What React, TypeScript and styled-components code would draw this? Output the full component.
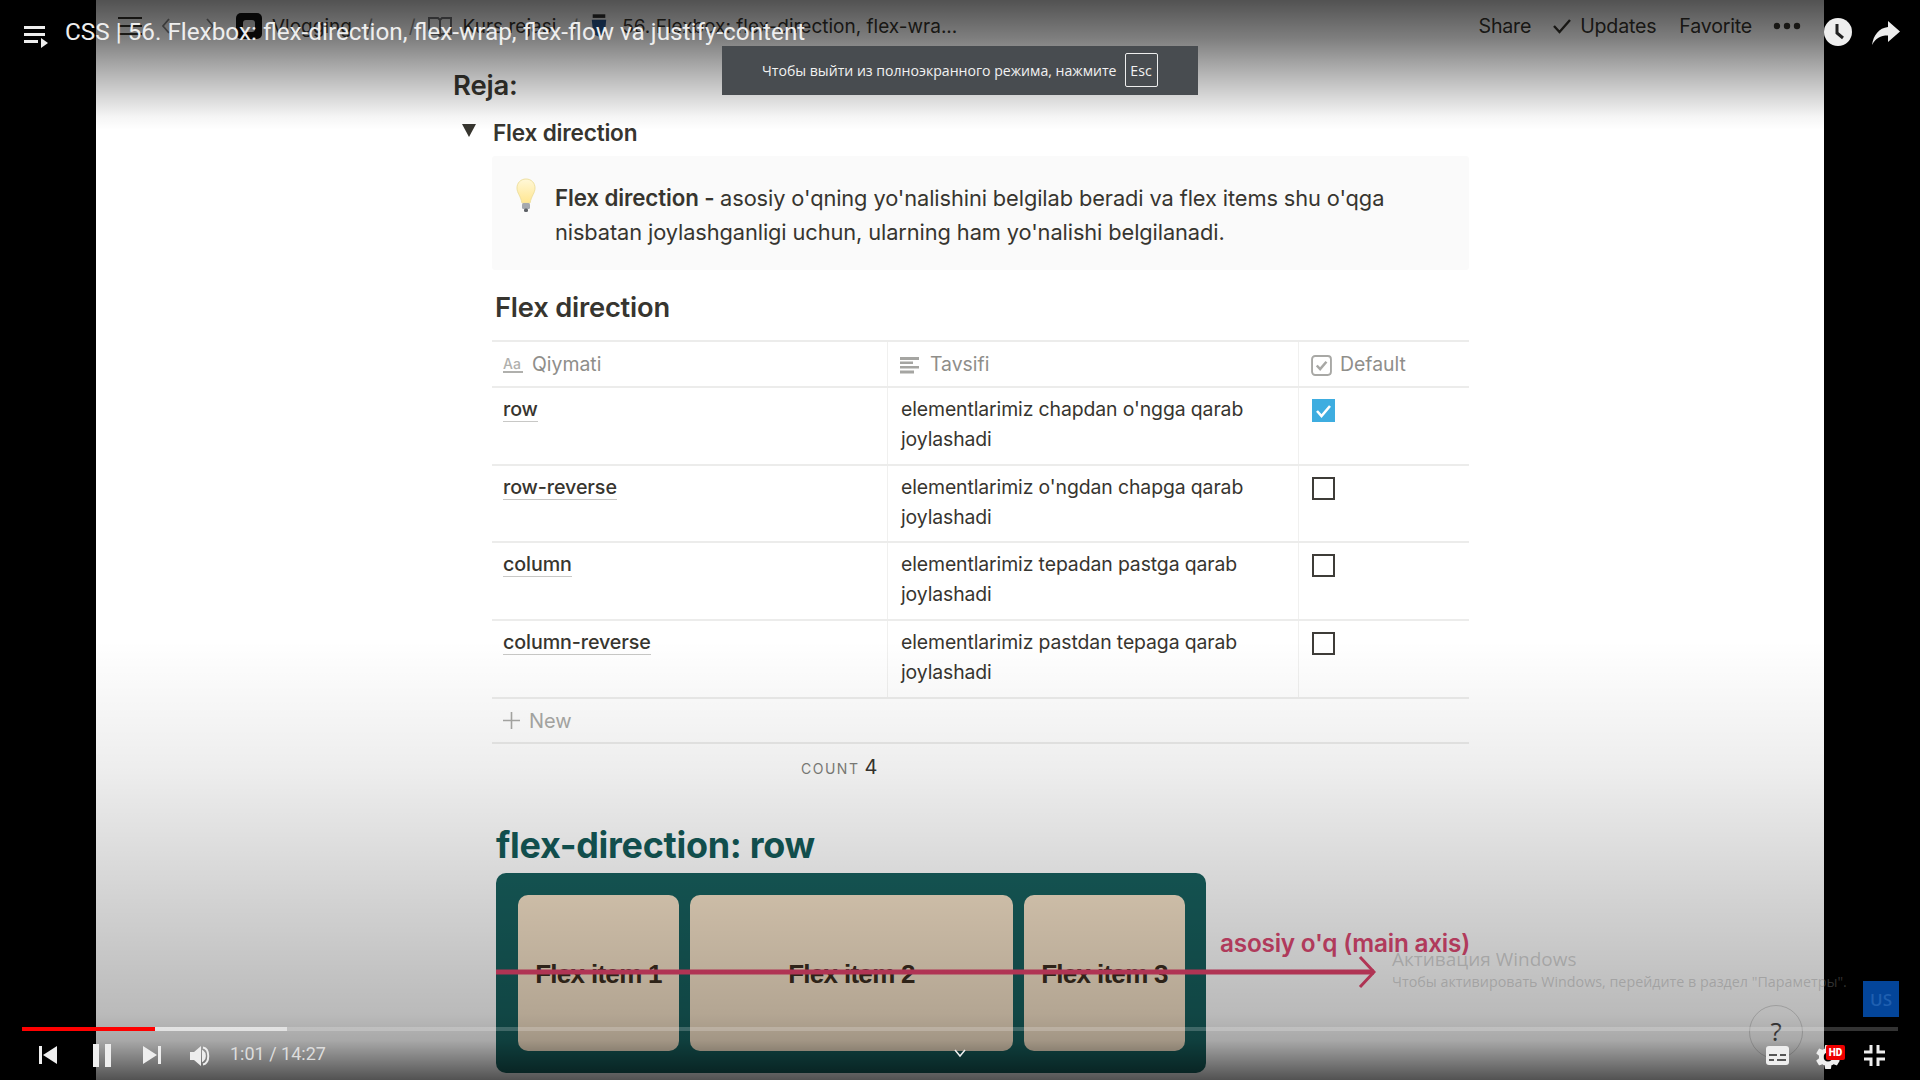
import React from "react";
import styled, { createGlobalStyle } from "styled-components";
import { MdSettings } from "react-icons/md";

const Global = createGlobalStyle`
  html, body { margin: 0; padding: 0; background: #000; }
  body { width: 1920px; height: 1080px; overflow: hidden; font-family: Inter, "Noto Sans", sans-serif; }
  * { box-sizing: border-box; }
`;

const Stage = styled.div`
  position: relative; width: 1920px; height: 1080px; display: flex; overflow: hidden; background: #000;
`;
const Pillar = styled.div`
  width: 96px; flex: none; background: #000;
`;
const Frame = styled.main`
  position: relative; width: 1728px; height: 1080px; flex: none; background: #fff; color: #37352f;
  display: flex; flex-direction: column; overflow: hidden;
`;

/* Notion top bar */
const TopBar = styled.div`
  height: 52px; flex: none; display: flex; align-items: center; justify-content: space-between;
  padding: 0 23px 0 22px; font-size: 19.6px; color: #37352f; letter-spacing: -0.2px;
`;
const Crumbs = styled.div`
  display: flex; align-items: center; white-space: nowrap; font-size: 19px; letter-spacing: 0;
`;
const Crumb = styled.span<{ $gap?: number; $inner?: number }>`
  display: inline-flex; align-items: center; gap: ${p => p.$inner ?? 10}px; margin-left: ${p => p.$gap ?? 0}px;
`;
const Sep = styled.span<{ $gap: number }>`
  color: #999; margin-left: ${p => p.$gap}px;
`;
const Arrows = styled.svg`
  margin-left: 18px;
`;
const Actions = styled.div`
  display: flex; align-items: center; gap: 21px; white-space: nowrap;
`;
const ActionCheck = styled.span`
  display: inline-flex; align-items: center; gap: 8px; margin-right: 2px;
`;

/* page */
const Page = styled.div`
  padding-left: 357px; width: 1373px; display: flex; flex-direction: column;
`;
const Reja = styled.h2`
  margin: 13px 0 0; font-size: 27.5px; line-height: 40px; font-weight: 600; letter-spacing: -0.2px;
`;
const ToggleRow = styled.div`
  margin-top: 7px; height: 40px; display: flex; align-items: center; gap: 17px;
  font-size: 22.6px; font-weight: 600; letter-spacing: -0.2px;
`;
const Triangle = styled.span`
  width: 0; height: 0; margin-left: 9px; margin-bottom: 3px;
  border-left: 7px solid transparent; border-right: 7px solid transparent; border-top: 13px solid #37352f;
`;
const Indent = styled.div`
  margin-left: 39px; display: flex; flex-direction: column;
`;
const Callout = styled.div`
  margin-top: 4px; height: 114px; background: #fafafa; border-radius: 3px; display: flex;
  padding: 25px 20px 0 24px; gap: 19px;
`;
const CalloutText = styled.p`
  margin: 0; font-size: 21.8px; line-height: 33.5px; width: 860px; letter-spacing: -0.1px;
  strong { font-weight: 600; font-size: 22.3px; }
`;
const TableTitle = styled.h3`
  margin: 19px 0 0 3px; height: 51px; line-height: 38px; font-size: 27.3px; font-weight: 600; letter-spacing: -0.2px;
`;
const Row = styled.div<{ $h: number }>`
  display: grid; grid-template-columns: 396px 411px 169px; height: ${p => p.$h}px;
  border-bottom: 2px solid #ececeb;
`;
const HeaderRow = styled(Row)`
  border-top: 2px solid #ececeb;
`;
const Cell = styled.div`
  padding: 8px 12px 0 11px; font-size: 19.4px; line-height: 29.5px; border-right: 1px solid #f0f0ef;
  &:last-child { border-right: 0; padding-left: 13px; }
`;
const HeadCell = styled(Cell)`
  display: flex; align-items: center; gap: 9px; padding-top: 2px; color: #8f8e8a;
  &:last-child { padding-left: 12px; gap: 8px; }
`;
const DescCell = styled(Cell)`
  padding-left: 13px; padding-top: 7px; letter-spacing: -0.1px;
`;
const NameCell = styled(Cell)`
  padding-top: 7px; font-size: 19.7px;
`;
const Name = styled.span`
  font-weight: 500; border-bottom: 1px solid #c8c8c6; letter-spacing: -0.1px;
`;
const Box = styled.div<{ $on?: boolean }>`
  width: 23px; height: 23px; margin-top: 3px; display: flex; align-items: center; justify-content: center;
  background: ${p => (p.$on ? "#3eade0" : "#fff")};
  border: ${p => (p.$on ? "none" : "2px solid #3e3c38")};
`;
const NewRow = styled.div`
  height: 45px; display: flex; align-items: center; gap: 9px; padding-left: 11px;
  border-bottom: 2px solid #ececeb; color: #a9a9a6; font-size: 20px;
`;
const Count = styled.div`
  height: 48px; padding-left: 309px; display: flex; align-items: center; gap: 5px;
  color: #7f7f7b; font-size: 14px; letter-spacing: 1.5px;
  b { font-weight: 400; font-size: 20px; color: #37352f; letter-spacing: 0; position: relative; top: -1px; }
`;
const FlexTitle = styled.h1`
  margin: 30px 0 0 4px; height: 46px; line-height: 46px; font-size: 36px; font-weight: 700;
  color: #145a58; letter-spacing: -0.3px;
`;
const DiagramRow = styled.div`
  position: relative; display: flex; margin-left: 4px; margin-top: 5px;
`;
const Container = styled.div`
  width: 710px; height: 200px; flex: none; background: #17605e; border-radius: 10px;
  padding: 22px; display: flex; gap: 11px;
`;
const Item = styled.div<{ $w: number }>`
  width: ${p => p.$w}px; flex: none; background: #f6e3c9; border-radius: 10px; padding-top: 3px;
  display: flex; align-items: center; justify-content: center; letter-spacing: -0.7px;
  font-family: "Liberation Sans", Arial, sans-serif; font-size: 26px; font-weight: 700; color: #3c2e20;
`;
const AxisLabel = styled.div`
  margin: 55px 0 0 14px; white-space: nowrap; font-size: 24.3px; font-weight: 600; color: #e04a74; letter-spacing: -0.2px;
`;
const Arrow = styled.svg`
  position: absolute; left: 0; top: 79px;
`;

/* Overlays */
const TopShade = styled.div`
  position: absolute; left: 0; right: 0; top: 0; height: 130px; pointer-events: none;
  background: linear-gradient(to bottom, rgba(0,0,0,.68), rgba(0,0,0,.5) 30%, rgba(0,0,0,.25) 62%, rgba(0,0,0,.04) 90%, rgba(0,0,0,0));
`;
const BottomShade = styled.div`
  position: absolute; left: 0; right: 0; bottom: 0; height: 440px; pointer-events: none;
  background: linear-gradient(to bottom, rgba(0,0,0,0), rgba(0,0,0,.07) 30%, rgba(0,0,0,.16) 55%, rgba(0,0,0,.27) 85%, rgba(0,0,0,.34) 91%, rgba(0,0,0,.68));
`;
const Hud = styled.div`
  position: absolute; inset: 0; pointer-events: none; color: #fff;
`;
const PlayerTitle = styled.div`
  position: absolute; left: 65px; top: 16px; font-family: Roboto, sans-serif; font-size: 24.3px; line-height: 32px;
  color: #eee; white-space: nowrap;
`;
const Toast = styled.div`
  position: absolute; left: 722px; top: 46px; width: 476px; height: 49px; background: #484c50;
  display: flex; align-items: center; padding-left: 40px; gap: 8px; font-family: "Open Sans", sans-serif;
  font-size: 14.1px; color: #f2f2f2; padding-bottom: 1px;
`;
const Esc = styled.span`
  width: 33px; height: 34px; border: 1px solid #eee; border-radius: 2px; display: flex; align-items: center; justify-content: center;
`;
const Glyph = styled.svg<{ $x: number; $y: number }>`
  position: absolute; left: ${p => p.$x}px; top: ${p => p.$y}px;
`;
const Track = styled.div`
  position: absolute; left: 22px; width: 1876px; top: 1027px; height: 4px; background: rgba(255,255,255,.2); display: flex;
`;
const Played = styled.div`
  width: 133px; background: #f00;
`;
const Buffered = styled.div`
  width: 132px; background: rgba(255,255,255,.55);
`;
const Time = styled.div`
  position: absolute; left: 230px; top: 1042px; font-family: Roboto, sans-serif; font-size: 18px; line-height: 24px; color: #ddd;
`;
const Watermark = styled.div`
  position: absolute; left: 1392px; top: 946px; font-family: "Open Sans", sans-serif; color: rgba(120,120,120,.42); white-space: nowrap;
`;
const WmTitle = styled.div`
  font-size: 19px; line-height: 26px;
`;
const WmSub = styled.div`
  font-size: 14.3px; line-height: 20px;
`;
const Tile = styled.div`
  position: absolute; left: 1863px; top: 981px; width: 36px; height: 36px; background: #03459a;
  display: flex; align-items: center; justify-content: center; font-family: "Open Sans", sans-serif; font-size: 17px; color: #1f5fb0; font-weight: 600;
`;
const Help = styled.div`
  position: absolute; left: 1749px; top: 1005px; width: 54px; height: 54px; border-radius: 50%;
  border: 1px solid rgba(0,0,0,.16); display: flex; align-items: center; justify-content: center;
  font-family: "Open Sans", sans-serif; font-size: 26px; color: #333; padding-bottom: 3px;
`;
const GearSlot = styled.div`
  position: absolute; left: 1813px; top: 1042px; width: 30px; height: 30px; color: #eee; display: flex;
`;
const HdBadge = styled.div`
  position: absolute; left: 1826px; top: 1045px; width: 19px; height: 15px; background: #e00; border-radius: 2px; color: #fff;
  font-family: Roboto, sans-serif; font-size: 10px; line-height: 15px; text-align: center; font-weight: 900;
`;

const rows = [
  { name: "row", desc: "elementlarimiz chapdan o'ngga qarab joylashadi", on: true, h: 78 },
  { name: "row-reverse", desc: "elementlarimiz o'ngdan chapga qarab joylashadi", on: false, h: 77 },
  { name: "column", desc: "elementlarimiz tepadan pastga qarab joylashadi", on: false, h: 78 },
  { name: "column-reverse", desc: "elementlarimiz pastdan tepaga qarab joylashadi", on: false, h: 78 },
];

const Bulb = () => (
  <svg width="20" height="35" viewBox="0 0 20 35" style={{ flex: "none", marginTop: -3 }}>
    <defs>
      <linearGradient id="bulb" x1="0" y1="0" x2="0" y2="1">
        <stop offset="0" stopColor="#fff8d8" />
        <stop offset="1" stopColor="#ffe690" />
      </linearGradient>
    </defs>
    <path d="M10 1C4.500 1 1 5 1 10c0 5 3.500 7.500 5 15h8c1.500-7.500 5-10 5-15 0-5-3.500-9-9-9z" fill="url(#bulb)" stroke="#efe0a0" strokeWidth="1" />
    <rect x="6" y="25" width="8" height="6" rx="1.500" fill="#a5a9ae" />
    <rect x="8" y="30.500" width="4" height="3.500" rx="1.500" fill="#5d6166" />
  </svg>
);

export default function App() {
  return (
    <Stage>
      <Global />
      <Pillar />
      <Frame>
        <TopBar>
          <Crumbs>
            <svg width="24" height="22" viewBox="0 0 24 22"><path d="M0 3h24M0 11h24M0 19h24" stroke="#37352f" strokeWidth="2" /></svg>
            <Arrows width="56" height="20" viewBox="0 0 56 20" fill="none" stroke="#888" strokeWidth="1.800"><path d="M9 3l-6 7 6 7M47 3l6 7-6 7" /></Arrows>
            <Crumb $gap={20}>
              <svg width="26" height="26" viewBox="0 0 26 26"><rect width="26" height="26" rx="5" fill="#111" /><rect x="7" y="7" width="12" height="12" rx="3" fill="#ddd" /></svg>
              Vlogging
            </Crumb>
            <Sep $gap={14}>/</Sep>
            <Sep $gap={36}>/</Sep>
            <Crumb $gap={12} $inner={11}>
              <svg width="24" height="22" viewBox="0 0 24 22" fill="none" stroke="#77787c" strokeWidth="2"><path d="M1 3h9l2 2 2-2h9v16h-9l-2 2-2-2H1zM12 5v15" /></svg>
              Kurs rejasi
            </Crumb>
            <Sep $gap={15}>/</Sep>
            <Crumb $gap={12} $inner={14}>
              <svg width="18" height="26" viewBox="0 0 20 26"><path d="M2 6h16l-1.500 16L10 25 3.500 22z" fill="#2a5a94" /><rect x="3" y="0" width="14" height="4" fill="#333" /></svg>
              56. Flexbox: flex-direction, flex-wra...
            </Crumb>
          </Crumbs>
          <Actions>
            <span>Share</span>
            <ActionCheck>
              <svg width="20" height="16" viewBox="0 0 20 16" fill="none" stroke="#37352f" strokeWidth="2.400"><path d="M2 8l5.500 6L18 2" /></svg>
              Updates
            </ActionCheck>
            <span>Favorite</span>
            <svg width="28" height="8" viewBox="0 0 28 8" fill="#37352f"><circle cx="4" cy="4" r="3.200" /><circle cx="14" cy="4" r="3.200" /><circle cx="24" cy="4" r="3.200" /></svg>
          </Actions>
        </TopBar>
        <Page>
          <Reja>Reja:</Reja>
          <ToggleRow><Triangle />Flex direction</ToggleRow>
          <Indent>
            <Callout>
              <Bulb />
              <CalloutText>
                <strong>Flex direction - </strong>asosiy o'qning yo'nalishini belgilab beradi va flex items shu o'qga nisbatan joylashganligi uchun, ularning ham yo'nalishi belgilanadi.
              </CalloutText>
            </Callout>
            <TableTitle>Flex direction</TableTitle>
            <HeaderRow $h={48}>
              <HeadCell>
                <svg width="20" height="18" viewBox="0 0 20 18"><text x="0" y="13" fontFamily="Inter" fontSize="14" fontWeight="500" fill="#b0b0ad">Aa</text><rect y="15" width="20" height="2" fill="#b0b0ad" /></svg>
                Qiymati
              </HeadCell>
              <HeadCell>
                <svg width="19" height="17" viewBox="0 0 19 17" fill="#a5a5a2" style={{ marginLeft: 1, marginRight: 2 }}><rect width="19" height="3" /><rect y="4.500" width="13" height="2.500" /><rect y="9" width="19" height="2.500" /><rect y="13.500" width="14" height="3" /></svg>
                Tavsifi
              </HeadCell>
              <HeadCell>
                <svg width="21" height="21" viewBox="0 0 20 20" fill="none" stroke="#a8a8a5"><rect x="1" y="1" width="18" height="18" rx="3" strokeWidth="1.800" /><path d="M5.500 10l3.200 3.400 6-7" strokeWidth="2.400" /></svg>
                Default
              </HeadCell>
            </HeaderRow>
            {rows.map(r => (
              <Row key={r.name} $h={r.h}>
                <NameCell><Name>{r.name}</Name></NameCell>
                <DescCell>{r.desc}</DescCell>
                <Cell>
                  <Box $on={r.on}>
                    {r.on && <svg width="17" height="14" viewBox="0 0 17 14" fill="none" stroke="#fff" strokeWidth="2.600"><path d="M2 7l4.500 5L15 2" /></svg>}
                  </Box>
                </Cell>
              </Row>
            ))}
            <NewRow>
              <svg width="17" height="17" viewBox="0 0 17 17" stroke="#a9a9a6" strokeWidth="1.600"><path d="M8.500 0v17M0 8.500h17" /></svg>
              New
            </NewRow>
            <Count>COUNT <b>4</b></Count>
          </Indent>
          <Indent>
            <FlexTitle>flex-direction: row</FlexTitle>
            <DiagramRow>
              <Container>
                <Item $w={161}>Flex item 1</Item>
                <Item $w={323}>Flex item 2</Item>
                <Item $w={161}>Flex item 3</Item>
              </Container>
              <AxisLabel>asosiy o'q (main axis)</AxisLabel>
              <Arrow width="880" height="40" viewBox="0 0 880 40" fill="none" stroke="#e6446e">
                <path d="M0 20h878" strokeWidth="5" />
                <path d="M864 5l14 15-14 15" strokeWidth="3" />
              </Arrow>
            </DiagramRow>
          </Indent>
        </Page>
        <TopShade />
        <BottomShade />
      </Frame>
      <Pillar />
      <Hud>
        <Glyph $x={24} $y={24} width="26" height="24" viewBox="0 0 26 24" fill="#eee">
          <rect y="2" width="21" height="3" /><rect y="9" width="21" height="3" /><rect y="16" width="14" height="3" /><path d="M17 14l7 5-7 5z" />
        </Glyph>
        <PlayerTitle>CSS | 56. Flexbox: flex-direction, flex-wrap, flex-flow va justify-content</PlayerTitle>
        <Toast>Чтобы выйти из полноэкранного режима, нажмите <Esc>Esc</Esc></Toast>
        <Glyph $x={1824} $y={18} width="28" height="28" viewBox="0 0 28 28">
          <circle cx="14" cy="14" r="14" fill="#eee" /><path d="M13 6v9l6 5" fill="none" stroke="#222" strokeWidth="3" />
        </Glyph>
        <Glyph $x={1872} $y={20} width="28" height="26" viewBox="0 0 28 26" fill="#eee">
          <path d="M16 1l12 10.500L16 22v-6.500C8 15.500 4 18 0 25 1.500 15 7 8 16 7z" />
        </Glyph>
        <Watermark>
          <WmTitle>Активация Windows</WmTitle>
          <WmSub>Чтобы активировать Windows, перейдите в раздел "Параметры".</WmSub>
        </Watermark>
        <Tile>US</Tile>
        <Help>?</Help>
        <Track><Played /><Buffered /></Track>
        <Glyph $x={39} $y={1046} width="18" height="18" viewBox="0 0 18 18" fill="#eee"><rect width="3" height="18" /><path d="M18 0v18L4 9z" /></Glyph>
        <Glyph $x={93} $y={1044} width="18" height="23" viewBox="0 0 18 23" fill="#eee"><rect width="6" height="23" /><rect x="12" width="6" height="23" /></Glyph>
        <Glyph $x={143} $y={1046} width="18" height="18" viewBox="0 0 18 18" fill="#eee"><rect x="15" width="3" height="18" /><path d="M0 0v18L14 9z" /></Glyph>
        <Glyph $x={190} $y={1046} width="21" height="20" viewBox="0 0 21 20" fill="#eee">
          <path d="M0 6h4l7-6v20l-7-6H0z" /><path d="M13 5.500c2.500 1.500 2.500 7.500 0 9zM13 1.500c7 1.500 7 15.500 0 17" fill="none" stroke="#eee" strokeWidth="2" />
        </Glyph>
        <Time>1:01 / 14:27</Time>
        <Glyph $x={950} $y={1048} width="20" height="10" viewBox="0 0 20 10" fill="none" stroke="#eee" strokeWidth="1.500"><path d="M5 2l5 6 5-6" /></Glyph>
        <Glyph $x={1766} $y={1046} width="23" height="19" viewBox="0 0 23 19">
          <rect width="23" height="19" rx="3" fill="#eee" /><path d="M3 9h8M14 9h6M3 14h5M11 14h9" stroke="#555" strokeWidth="2" />
        </Glyph>
        <GearSlot><MdSettings size={30} /></GearSlot>
        <HdBadge>HD</HdBadge>
        <Glyph $x={1864} $y={1045} width="21" height="21" viewBox="0 0 21 21" fill="none" stroke="#eee" strokeWidth="3"><path d="M7 0v7H0M14 0v7h7M7 21v-7H0M14 21v-7h7" /></Glyph>
      </Hud>
    </Stage>
  );
}
